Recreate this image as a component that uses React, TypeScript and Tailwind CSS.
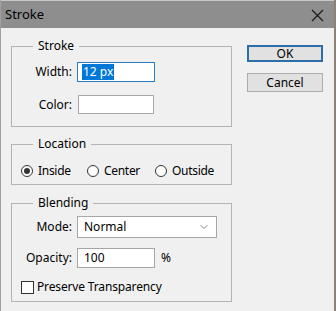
import { ChevronDown } from "lucide-react";

const font = { fontFamily: '"Noto Sans", sans-serif' };

const Group = ({ title, className, children }: { title: string; className?: string; children: React.ReactNode }) => (
	<fieldset className={`border border-[#b4b4b4] ${className ?? ""}`}>
		<legend className="ml-[21px] px-[5px] text-[12px] leading-[16px] text-black">{title}</legend>
		{children}
	</fieldset>
);

const Label = ({ children }: { children: React.ReactNode }) => (
	<span className="w-[60px] text-right text-[12px] leading-[16px] text-black">{children}</span>
);

const Radio = ({ label, checked, className }: { label: string; checked?: boolean; className?: string }) => (
	<label className={`flex items-center gap-[5px] ${className ?? ""}`}>
		<span className="w-[12px] h-[12px] rounded-full border border-[#333] bg-white flex items-center justify-center shrink-0">
			{checked && <span className="w-[6px] h-[6px] rounded-full bg-[#333]" />}
		</span>
		<span className="tracking-[-0.3px]">{label}</span>
	</label>
);

export default function App() {
	return (
		<div className="w-[336px] h-[311px] bg-[#f0f0f0] flex flex-col overflow-hidden border-l border-[#a0a0a0] border-r-2 border-r-[#8a8274]" style={font}>
			<div className="h-[28px] bg-[#8e8e8e] border-t border-[#c8c8c8] flex items-center justify-between pl-[4px] pr-[10px] text-[13px] text-black shrink-0">
				<span>Stroke</span>
				<svg width="13" height="13" viewBox="0 0 13 13" className="mt-[1px]">
					<path d="M1 1 L12 12 M12 1 L1 12" stroke="#1a1a1a" strokeWidth="1.2" />
				</svg>
			</div>
			<div className="flex text-[12px] leading-[18px] text-black">
				<div className="ml-[10px] w-[221px] flex flex-col">
					<Group title="Stroke" className="mt-[10px] pb-[12px]">
						<div className="flex items-center gap-[5px] mt-[8px]">
							<Label>Width:</Label>
							<div className="w-[78px] h-[20px] border border-[#2a7ac0] bg-white flex items-center pl-[4px]">
								<span className="bg-[#0078d7] text-white leading-[16px] px-[1px]">12 px</span>
							</div>
						</div>
						<div className="flex items-center gap-[5px] mt-[13px]">
							<Label>Color:</Label>
							<div className="w-[76px] h-[19px] border border-[#a6a6a6] bg-white ml-[1px]" />
						</div>
					</Group>
					<Group title="Location" className="mt-[9px] pb-[5px]">
						<div className="flex items-center mt-[10px] pl-[9px] h-[17px]">
							<Radio label="Inside" checked className="w-[66px]" />
							<Radio label="Center" className="w-[68px]" />
							<Radio label="Outside" />
						</div>
					</Group>
					<Group title="Blending" className="mt-[10px] pb-[5px]">
						<div className="flex items-center gap-[5px] mt-[5px]">
							<Label>Mode:</Label>
							<div className="w-[140px] h-[22px] border border-[#a6a6a6] bg-white flex items-center justify-between pl-[6px] pr-[6px]">
								<span>Normal</span>
								<ChevronDown size={12} strokeWidth={1.5} color="#555" />
							</div>
						</div>
						<div className="flex items-center gap-[5px] mt-[10px]">
							<Label>Opacity:</Label>
							<div className="w-[78px] h-[20px] border border-[#a6a6a6] bg-white flex items-center pl-[6px]">100</div>
							<span className="ml-[1px]">%</span>
						</div>
						<div className="flex items-center gap-[3px] mt-[10px] pl-[9px] h-[18px]">
							<span className="w-[13px] h-[13px] border border-[#333] bg-white" />
							<span className="tracking-[-0.15px]">Preserve Transparency</span>
						</div>
					</Group>
				</div>
				<div className="ml-[15px] mt-[17px] flex flex-col gap-[11px]">
					<button className="w-[76px] h-[17px] border-2 border-[#2b6ea8] bg-[#e1e1e1] text-[12px] leading-[13px]">OK</button>
					<button className="w-[76px] h-[19px] border border-[#adadad] bg-[#e1e1e1] text-[12px] leading-[15px]">Cancel</button>
				</div>
			</div>
		</div>
	);
}
